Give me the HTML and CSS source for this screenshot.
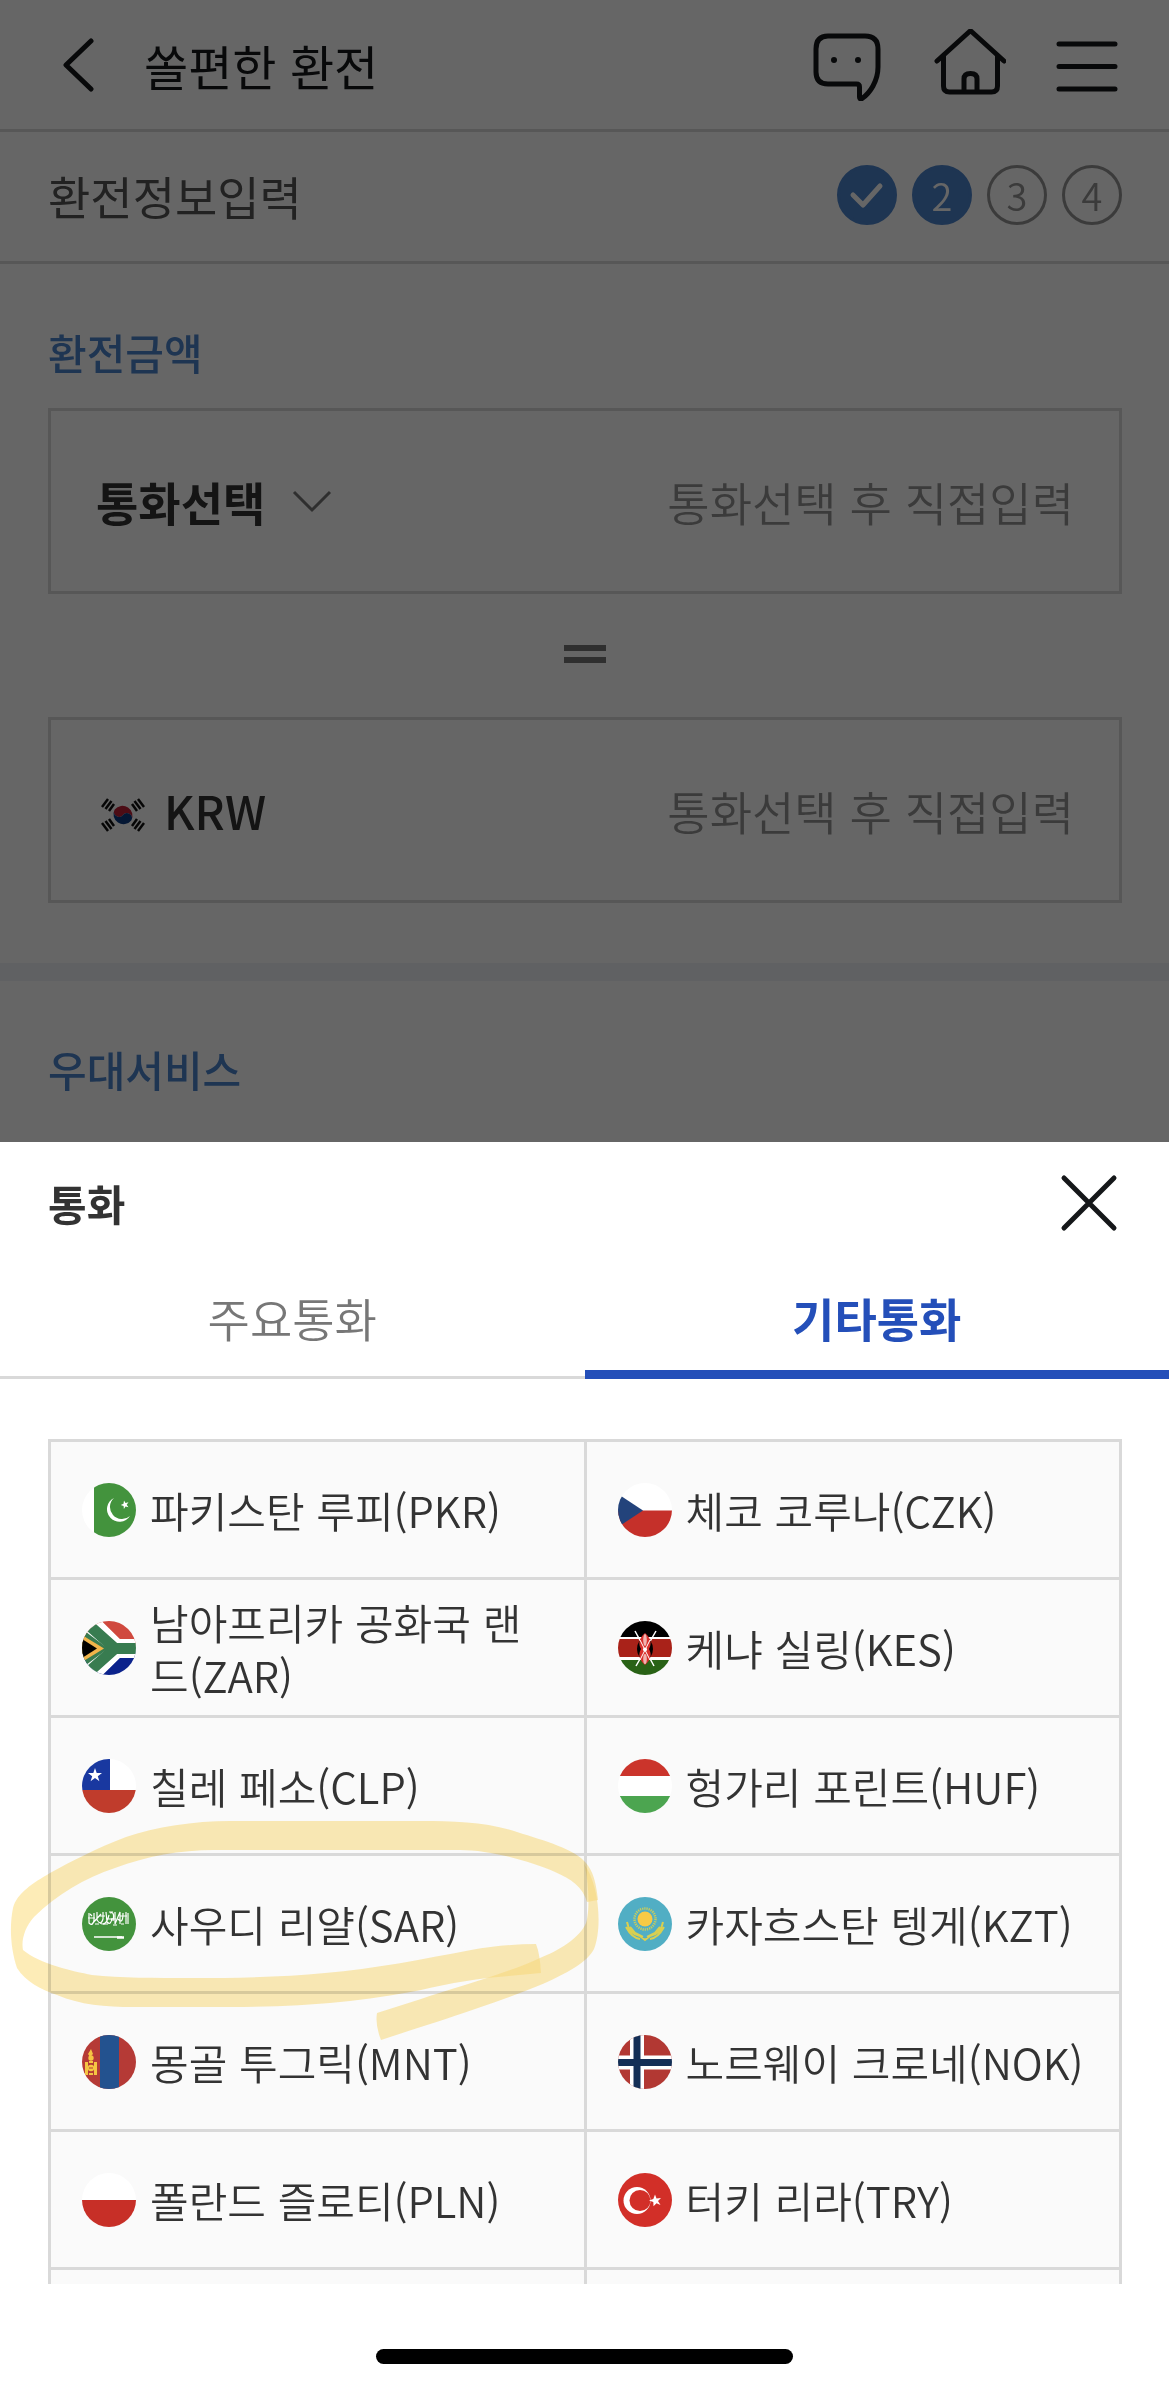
FILE: index.html
```html
<!DOCTYPE html>
<html lang="ko">
<head>
<meta charset="utf-8">
<meta name="viewport" content="width=device-width, initial-scale=1">
<title>쏠편한 환전</title>
<link rel="stylesheet" href="styles.css">
</head>
<body>
<div class="app">
  <div class="page">
    <header class="topbar">
      <button class="icon-btn back" type="button" aria-label="뒤로">
        <svg width="34" height="54" viewBox="0 0 34 54"><path d="M29 3 4 27 29 51"/></svg>
      </button>
      <h1 class="topbar-title">쏠편한 환전</h1>
      <nav class="topbar-actions" aria-label="메뉴">
        <button class="icon-btn" type="button" aria-label="챗봇">
          <svg width="72" height="72" viewBox="0 -2 72 72">
            <path d="M16 5H53Q66 5 66 18V36C66 50 58 62 50 67.500Q47.500 69 47.500 66V56Q47.500 53 44.500 53H16Q4 53 4 41V18Q4 5 16 5Z"/>
            <circle class="dot" cx="22" cy="29" r="3"/><circle class="dot" cx="46" cy="29" r="3"/>
          </svg>
        </button>
        <button class="icon-btn" type="button" aria-label="홈">
          <svg width="72" height="72" viewBox="0 3 72 72">
            <path d="M3 35 35 6Q36.500 4.500 38 6L70 35M9.500 30V60Q9.500 66 15.500 66H57.500Q63.500 66 63.500 60V30M30 66V53Q30 47.500 36.500 47.500T43 53V66"/>
          </svg>
        </button>
        <button class="icon-btn" type="button" aria-label="전체메뉴">
          <svg width="62" height="72" viewBox="0 0 62 72"><path d="M3 15H59M3 37.500H59M3 60H59"/></svg>
        </button>
      </nav>
    </header>

    <div class="stepbar">
      <h2 class="stepbar-title">환전정보입력</h2>
      <ol class="steps">
        <li class="step step-on" aria-label="1단계 완료">
          <svg width="36" height="36" viewBox="0 0 36 36"><path d="M4 18 14 28 31 9"/></svg>
        </li>
        <li class="step step-on" aria-current="step">2</li>
        <li class="step">3</li>
        <li class="step">4</li>
      </ol>
    </div>

    <section class="section">
      <h3 class="section-title">환전금액</h3>
      <div class="amount">
        <button class="currency-select" type="button">통화선택
          <svg width="42" height="24" viewBox="0 0 42 24"><path d="M3 3 21 21 39 3"/></svg>
        </button>
        <input class="amount-input" type="text" aria-label="외화 금액" placeholder="통화선택 후 직접입력">
      </div>
      <div class="equals" aria-hidden="true"></div>
      <div class="amount">
        <label class="currency-krw" for="krw">
          <svg width="54" height="46" viewBox="0 0 54 46">
            <g transform="translate(27 28)">
              <path fill="#bf1f36" d="M-8.300-5.500A10 10 0 0 1 8.300 5.500A5 5 0 0 0 0 0A5 5 0 0 1-8.300-5.500Z"/>
              <path fill="#0c3a83" d="M-8.300-5.500A10 10 0 0 0 8.300 5.500A5 5 0 0 0 0 0A5 5 0 0 1-8.300-5.500Z"/>
              <g stroke="#111" stroke-width="2.500">
                <path d="M-21-8-15-16M-17.500-6-11.500-14M-14-4-9-11"/>
                <path d="M21-8 15-16M17.500-6 11.500-14M14-4 9-11"/>
                <path d="M-21 8-15 16M-17.500 6-11.500 14M-14 4-9 11"/>
                <path d="M21 8 15 16M17.500 6 11.500 14M14 4 9 11"/>
              </g>
            </g>
          </svg>
          KRW
        </label>
        <input class="amount-input" id="krw" type="text" placeholder="통화선택 후 직접입력">
      </div>
    </section>

    <section class="section section-next">
      <h3 class="section-title">우대서비스</h3>
    </section>
  </div>

  <div class="sheet" role="dialog" aria-labelledby="sheet-title">
    <div class="sheet-head">
      <h2 class="sheet-title" id="sheet-title">통화</h2>
      <button class="icon-btn close" type="button" aria-label="닫기">
        <svg width="58" height="58" viewBox="0 0 58 58"><path d="M4 4 54 54M54 4 4 54"/></svg>
      </button>
    </div>
    <div class="tabs" role="tablist">
      <button class="tab" type="button" role="tab" aria-selected="false">주요통화</button>
      <button class="tab tab-on" type="button" role="tab" aria-selected="true">기타통화</button>
    </div>
    <div class="list-scroll">
      <ul class="list">
        <li class="cell"><button class="currency" type="button">
          <svg class="flag" viewBox="0 0 54 54"><rect width="54" height="54" fill="#fff"/><rect x="12" width="42" height="54" fill="#43933d"/><path fill="#fff" d="M32 15A12.500 12.500 0 1 0 48 33A11 11 0 1 1 32 15Z"/><path fill="#fff" d="m42 17.500 1.500 2.500 3-.8-1.800 2.600 1.800 2.400-3-.7-1.600 2.500-.3-3-2.900-1 2.800-1.300Z"/></svg>
          <span>파키스탄 루피(PKR)</span></button></li>
        <li class="cell"><button class="currency" type="button">
          <svg class="flag" viewBox="0 0 54 54"><rect width="54" height="54" fill="#fff"/><path fill="#c5302a" d="M0 27.500H54V54H0Z"/><path fill="#23437b" d="M0 11 25 27.500 0 44Z"/></svg>
          <span>체코 코루나(CZK)</span></button></li>
        <li class="cell"><button class="currency" type="button">
          <svg class="flag" viewBox="0 0 54 54"><rect width="54" height="27" fill="#d0493e"/><rect y="27" width="54" height="27" fill="#0b228c"/><path stroke="#fff" stroke-width="19" fill="none" d="M2-4 34 27.500 2 59M32 27.500H60"/><path stroke="#387c50" stroke-width="11" fill="none" d="M0-2 33 27.500 0 57M32 27.500H60"/><path fill="#387c50" d="M0 8V47L26 27.500Z"/><path fill="#f1b44a" d="M0 14 22 27.500 0 41Z"/><path fill="#000" d="M0 18 15 27.500 0 37Z"/></svg>
          <span>남아프리카 공화국 랜드(ZAR)</span></button></li>
        <li class="cell"><button class="currency" type="button">
          <svg class="flag" viewBox="0 0 54 54"><rect width="54" height="54" fill="#fff"/><rect width="54" height="16" fill="#000"/><rect y="18" width="54" height="18" fill="#a92219"/><rect y="39" width="54" height="15" fill="#296216"/><path stroke="#fff" stroke-width="1.500" d="M17 10 36 45M38 10 18 45"/><ellipse cx="27" cy="28" rx="8" ry="11" fill="#000"/><path fill="#d8302c" d="M27 12C21 17 20 23 23 28C20 33 21 39 27 44C33 39 34 33 31 28C34 23 33 17 27 12Z"/><path stroke="#fff" stroke-width="1" fill="none" d="M22 19 32 39M32 19 22 39"/><ellipse cx="27" cy="19" rx="1.800" ry="6" fill="#efb3b0"/><ellipse cx="27" cy="38" rx="1.800" ry="5" fill="#efb3b0"/><circle cx="27" cy="28.500" r="2" fill="#fff"/></svg>
          <span>케냐 실링(KES)</span></button></li>
        <li class="cell"><button class="currency" type="button">
          <svg class="flag" viewBox="0 0 54 54"><rect width="54" height="54" fill="#fff"/><rect width="28" height="31" fill="#1938a0"/><rect y="31" width="54" height="23" fill="#c03c2c"/><path fill="#fff" d="m13 9 1.700 5h5.300l-4.200 3.200 1.600 5-4.400-3.100-4.400 3.100 1.600-5L6 14h5.300Z"/></svg>
          <span>칠레 페소(CLP)</span></button></li>
        <li class="cell"><button class="currency" type="button">
          <svg class="flag" viewBox="0 0 54 54"><rect width="54" height="54" fill="#fff"/><rect width="54" height="17" fill="#cb342b"/><rect y="37" width="54" height="17" fill="#4ca550"/></svg>
          <span>헝가리 포린트(HUF)</span></button></li>
        <li class="cell marked"><button class="currency" type="button">
          <svg class="flag" viewBox="0 0 54 54"><rect width="54" height="54" fill="#43933d"/><g stroke="#fff" stroke-width="1.200" fill="none"><path d="M7 16V26Q11 30 12 23V16M10 27 19 17M15 15V23Q19 29 21 22V15M18 26Q24 30 27 18M24 15 25 25Q29 29 30 21M28 16Q33 14 31 24M33 15V27L38 15V27M36 22Q41 28 41 16M44 15V27M46 16V27M6 21H13M17 19H23M25 22H34M38 19H45"/><path d="M8 17 10 19M21 27H26M13 27H17M31 28H35M39 27H42M27 15H31"/></g><path stroke="#fff" stroke-width="1.500" d="M12 40H40"/><path stroke="#fff" stroke-width="2.500" d="M35 40.500H42"/></svg>
          <span>사우디 리얄(SAR)</span></button>
          <svg class="marker" width="620" height="240" viewBox="0 1810 620 240" aria-hidden="true">
            <path d="M536 1944C515 1944 493 1946 471 1950C423 1959 374 1969 325 1973C285 1977 238 1978 191 1978C155 1978 120 1978 92 1975C72 1971 40 1964 23 1950C21 1940 25 1927 34 1917C56 1895 85 1878 115 1868C147 1856 180 1850 214 1850H460C490 1850 530 1861 555 1872C571 1879 583 1887 587 1902L598 1900C596 1882 593 1871 586 1863C575 1849 545 1841 517 1832C487 1822 455 1821 421 1821H230C194 1821 155 1827 126 1837C97 1848 72 1861 50 1873C33 1883 17 1893 13 1908C9 1928 11 1950 17 1968C26 1982 40 1989 57 1995C81 2005 104 2007 134 2007H230C305 2007 358 2002 421 1990C450 1983 480 1978 509 1976L541 1973Q540 1954 536 1944Z"/>
            <path d="M584 1864C589 1880 590 1912 586 1923C580 1938 558 1951 540 1958C508 1973 454 1988 421 1999L377 2013Q375 2025 381 2040C411 2030 441 2021 478 2008C513 1996 550 1983 574 1968C585 1961 591 1955 594 1949C602 1930 600 1885 584 1864Z"/>
          </svg>
        </li>
        <li class="cell"><button class="currency" type="button">
          <svg class="flag" viewBox="0 0 54 54"><rect width="54" height="54" fill="#51aec4"/><circle cx="27" cy="22" r="7.500" fill="#f7ca45"/><circle cx="27" cy="22" r="10.500" fill="none" stroke="#c6cc5e" stroke-width="2.500" stroke-dasharray="1.300 .9"/><path fill="none" stroke="#d9cf50" stroke-width="2" d="M9 25Q11 37 22 39L27 43 32 39Q43 37 45 25M8 30Q14 41 22 42M46 30Q40 41 32 42M12 30 17 36 25 40M42 30 37 36 29 40"/></svg>
          <span>카자흐스탄 텡게(KZT)</span></button></li>
        <li class="cell"><button class="currency" type="button">
          <svg class="flag" viewBox="0 0 54 54"><rect width="54" height="54" fill="#b53a36"/><rect x="18" width="19" height="54" fill="#23528f"/><g fill="#f5c542"><path d="M9 14 11 19 8 22 6 19ZM3 27H6V40H3ZM12 27H15V40H12ZM7 26H11V28H7ZM7 38H11V40H7Z"/><circle cx="9" cy="23" r="2.700"/><circle cx="9" cy="33" r="3.200"/></g><path stroke="#b53a36" d="M7 33H11"/></svg>
          <span>몽골 투그릭(MNT)</span></button></li>
        <li class="cell"><button class="currency" type="button">
          <svg class="flag" viewBox="0 0 54 54"><rect width="54" height="54" fill="#b23833"/><path stroke="#fff" stroke-width="14" d="M19 0V54M0 27.500H54"/><path stroke="#142f56" stroke-width="7" d="M19 0V54M0 27.500H54"/></svg>
          <span>노르웨이 크로네(NOK)</span></button></li>
        <li class="cell"><button class="currency" type="button">
          <svg class="flag" viewBox="0 0 54 54"><rect width="54" height="54" fill="#fff"/><rect y="27" width="54" height="27" fill="#c72f27"/></svg>
          <span>폴란드 즐로티(PLN)</span></button></li>
        <li class="cell"><button class="currency" type="button">
          <svg class="flag" viewBox="0 0 54 54"><rect width="54" height="54" fill="#d22f28"/><circle cx="19" cy="27.500" r="13.500" fill="#fff"/><circle cx="22" cy="27.500" r="10.500" fill="#d22f28"/><path fill="#fff" d="m37 21.500 1.500 4 4.500-.5-3 3 2.500 4-4-1.700-3 3-.2-4.300-4.300-1.500 4.300-1.500Z"/></svg>
          <span>터키 리라(TRY)</span></button></li>
        <li class="cell"></li>
        <li class="cell"></li>
      </ul>
    </div>
    <div class="home-area"><div class="home-indicator"></div></div>
  </div>
</div>
</body>
</html>
```
FILE: styles.css
```css
* {
  box-sizing: border-box;
  margin: 0;
  padding: 0;
}

body {
  font-family: "Noto Sans CJK KR", "Noto Sans", sans-serif;
  font-size: 42px;
  color: #333;
  background: #fff;
}

button,
input {
  font: inherit;
  color: inherit;
  background: none;
  border: 0;
}

ul,
ol {
  list-style: none;
}

svg {
  display: block;
  flex: none;
}

.app {
  display: flex;
  flex-direction: column;
  height: 100vh;
  overflow: hidden;
}

/* Dimmed page behind the sheet */
.page {
  position: relative;
  flex: none;
  background: #fff;
}

.page::after {
  content: "";
  position: absolute;
  inset: 0;
  background: rgba(0, 0, 0, 0.6);
}

.topbar,
.stepbar {
  display: flex;
  align-items: center;
  height: 132px;
  padding: 0 47px 0 48px;
  border-bottom: 3px solid #d9d9d9;
}

.icon-btn svg {
  fill: none;
  stroke: #151719;
  stroke-width: 5;
  stroke-linecap: round;
  stroke-linejoin: round;
}

.icon-btn .dot {
  fill: #151719;
  stroke: none;
}

.back {
  padding: 0 12px 0 14px;
}

.topbar-title {
  flex: 1;
  padding-left: 36px;
  font-size: 48px;
  font-weight: 400;
  color: #151719;
}

.topbar-actions {
  display: flex;
  align-items: center;
  gap: 50px;
  padding-right: 4px;
}

.stepbar {
  justify-content: space-between;
  padding-bottom: 3px;
}

.stepbar-title {
  font-size: 46px;
  font-weight: 400;
  color: #555;
}

.steps {
  display: flex;
  gap: 15px;
}

.step {
  display: flex;
  align-items: center;
  justify-content: center;
  width: 60px;
  height: 60px;
  border: 3px solid #949494;
  border-radius: 50%;
  font-family: "Noto Sans CJK KR DemiLight", "Noto Sans CJK KR", sans-serif;
  font-size: 38px;
  line-height: 48px;
  color: #949494;
}

.step-on {
  border-color: #4d84cc;
  background: #4d84cc;
  color: #fff;
}

.step svg {
  fill: none;
  stroke: #fff;
  stroke-width: 5;
  stroke-linecap: round;
  stroke-linejoin: round;
}

.section {
  padding: 58px 47px 60px 48px;
}

.section-next {
  padding-bottom: 43px;
  border-top: 18px solid #f0f2f8;
}

.section-title {
  font-size: 42px;
  font-weight: 500;
  line-height: 60px;
  color: #4d84cc;
}

.section-title + .amount {
  margin-top: 26px;
}

.amount {
  display: flex;
  align-items: center;
  justify-content: space-between;
  height: 186px;
  padding: 0 45px;
  border: 3px solid #d9d9d9;
  font-size: 46px;
}

.currency-select,
.currency-krw {
  display: flex;
  align-items: center;
  flex: none;
}

.currency-select {
  gap: 26px;
  font-weight: 700;
}

.currency-select svg {
  fill: none;
  stroke: #777;
  stroke-width: 3;
}

.currency-krw {
  gap: 14px;
  font-weight: 500;
}

.amount-input {
  flex: 1;
  min-width: 0;
  height: 100%;
  text-align: right;
  outline: 0;
}

.amount-input::placeholder {
  color: #949494;
  font-family: "Noto Sans CJK KR DemiLight", "Noto Sans CJK KR", sans-serif;
  opacity: 1;
}

.equals {
  width: 42px;
  height: 18px;
  margin: 51px auto 54px;
  border-top: 6px solid #777;
  border-bottom: 6px solid #777;
}

/* Currency sheet */
.sheet {
  display: flex;
  flex: 1;
  flex-direction: column;
  min-height: 0;
  background: #fff;
}

.sheet-head {
  display: flex;
  flex: none;
  align-items: center;
  justify-content: space-between;
  height: 121px;
  padding: 0 51px 0 48px;
}

.sheet-title {
  font-size: 42px;
  font-weight: 700;
}

.tabs {
  display: flex;
  flex: none;
  height: 116px;
}

.tab {
  flex: 1;
  padding-bottom: 6px;
  border-bottom: 3px solid #d9d9d9;
  font-family: "Noto Sans CJK KR DemiLight", "Noto Sans CJK KR", sans-serif;
  font-size: 46px;
  color: #777;
}

.tab-on {
  padding-bottom: 0;
  border-bottom: 9px solid #244fb9;
  font-family: "Noto Sans CJK KR", sans-serif;
  font-weight: 700;
  color: #244fb9;
}

.list-scroll {
  flex: 1;
  min-height: 0;
  padding: 60px 47px 0 48px;
  overflow: hidden auto;
  scrollbar-width: none;
}

.list {
  display: grid;
  grid-template-columns: 1fr 1fr;
  grid-auto-rows: 135px;
  gap: 3px;
  padding: 3px;
  background: #d9d9d9;
}

.cell {
  background: #fafafa;
}

.currency {
  display: flex;
  align-items: center;
  gap: 14px;
  width: 100%;
  height: 100%;
  padding: 0 31px;
  font-family: "Noto Sans CJK KR DemiLight", "Noto Sans CJK KR", sans-serif;
  line-height: 53px;
  text-align: left;
}

.flag {
  width: 54px;
  height: 54px;
  border-radius: 50%;
}

/* Highlighter ring drawn over the marked currency */
.marked {
  position: relative;
}

.marker {
  position: absolute;
  top: -46px;
  left: -51px;
  z-index: 1;
  mix-blend-mode: multiply;
  pointer-events: none;
}

.marker path {
  fill: #fcdc7c;
  fill-opacity: 0.55;
}

.home-area {
  flex: none;
  padding: 65px 0 23px;
}

.home-indicator {
  width: 417px;
  height: 15px;
  margin: 0 auto;
  border-radius: 8px;
  background: #000;
}
```
